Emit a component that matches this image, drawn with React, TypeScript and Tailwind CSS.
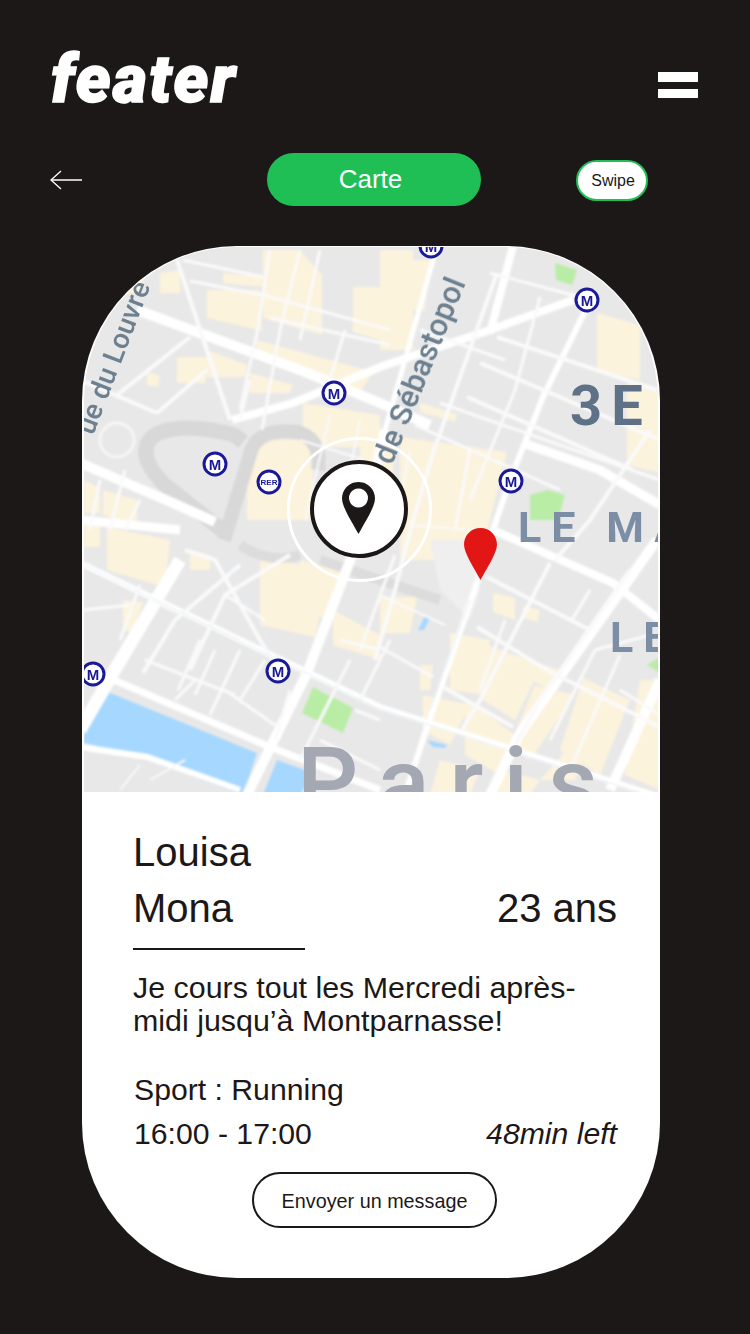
import React from "react";

const sans = "font-['Liberation_Sans',Arial,sans-serif]";

const blocks: string[] = [
  "207,290 260,290 262,331 207,318", "263,250 300,250 322,275 322,335 263,318", "353,287 380,287 380,340 353,332",
  "223,273 263,277 263,287 223,283", "257,340 373,372 360,392 257,352", "207,350 247,365 245,377 207,377",
  "250,373 293,385 290,393 250,393", "303,403 380,415 380,447 303,447", "247,440 313,440 313,520 247,520",
  "147,372 160,376 158,387 147,385", "177,357 210,357 205,383 177,383", "160,273 180,270 180,293 160,293",
  "84,480 100,488 100,513 84,513", "103,490 137,500 137,525 103,515", "380,250 413,250 413,350 380,350",
  "413,260 430,260 425,310 413,310", "597,313 640,325 640,380 597,370", "627,383 660,392 660,473 627,465",
  "420,403 457,414 455,422 420,412", "400,437 507,452 490,520 400,520", "107,527 170,540 165,587 107,570",
  "190,550 210,555 210,570 190,570", "260,557 330,570 315,637 260,625", "333,610 380,635 380,660 333,645",
  "123,600 143,602 133,632 123,630", "84,520 100,520 100,547 84,547", "400,520 490,520 480,560 400,560",
  "493,593 515,598 515,620 493,612", "470,640 560,670 555,692 470,650", "450,633 490,640 485,695 450,690",
  "483,653 537,675 515,720 483,700", "380,597 417,597 410,633 380,633", "523,606 540,610 538,622 523,618",
  "423,695 470,705 450,745 423,730", "465,698 515,735 500,775 465,755", "535,685 575,695 530,760 510,745",
  "583,678 630,700 600,775 560,750", "640,680 660,680 660,790 625,775", "420,665 433,665 430,690 420,690",
  "580,735 590,740 575,780 540,780", "120,272 145,272 140,293 120,293",
  "440,760 480,770 470,795 430,795", "500,770 540,780 530,795 495,795", "360,440 395,440 390,520 360,520",
  "300,560 345,570 330,620 300,610",
];

const wide: [string, number][] = [
  ["137,310 300,370 380,403 430,425", 10], ["523,443 600,470 660,505", 9],
  ["437,246 405,360 385,430", 5], ["385,430 375,470 353,553 307,673 247,795", 10],
  ["657,540 520,733 490,795", 10], ["493,530 613,583 660,620", 8], ["660,680 610,790", 10],
  ["180,560 113,673 80,730", 13], ["80,463 173,503 215,522", 10], ["80,520 180,530", 9],
  ["573,300 490,330 380,367 293,403 232,420", 8], ["587,307 543,397 510,480 493,530 477,583 427,727 405,795", 6],
  ["107,677 270,747 380,790", 7], ["80,747 147,757 240,790", 6], ["80,563 380,707 500,745 660,797", 6],
  ["513,246 490,333", 8],
];
const thin: [string, number][] = [
  ["177,260 230,420", 4], ["183,260 263,277", 3], ["190,281 263,295", 3], ["270,250 257,333 240,410", 3],
  ["117,395 190,337", 4], ["157,413 207,370", 4], ["80,380 157,413", 4], ["300,250 280,330 262,430", 3],
  ["263,295 390,330", 3], ["270,318 390,345", 3], ["320,250 300,340", 3], ["345,330 330,380", 3], ["250,380 240,420", 3],
  ["490,273 580,297", 3], ["497,337 657,390", 4], ["480,363 660,440", 4], ["467,397 633,470", 4], ["497,273 433,453 413,520 395,590 375,660", 4],
  ["420,330 505,360", 3], ["440,403 660,480", 3], ["415,425 560,490", 3], ["540,297 515,390 470,500", 3],
  ["650,430 590,520 555,560", 4], ["487,577 590,630", 4], ["550,563 480,700 460,733", 4], ["477,627 547,670 660,727", 4],
  ["443,687 513,727", 4], ["380,647 433,677", 3], ["590,590 572,620", 3], ["630,570 540,700 515,745", 4], ["595,650 550,740", 3],
  ["620,655 570,770", 3], ["650,635 595,650", 3], ["620,690 660,715", 3], ["390,640 360,700", 3], ["395,555 360,650", 3],
  ["190,670 225,595 290,555", 4], ["143,673 175,620 240,565", 4], ["185,550 215,560 260,640 285,680", 4], ["225,595 265,620", 3],
  ["145,660 235,695", 3], ["195,680 175,700", 3], ["150,600 240,640", 3], ["200,640 178,690", 3], ["215,650 195,695", 3],
  ["240,650 210,715", 3], ["225,690 275,725", 3], ["120,640 140,585", 3], ["84,610 130,605", 3],
  ["240,700 265,660", 3], ["290,690 275,740", 3], ["350,660 300,760", 3], ["340,640 380,650", 3], ["355,710 380,720", 3],
  ["320,740 380,770", 3], ["100,480 90,530", 3], ["125,470 110,530", 3], ["140,500 125,530", 3],
  ["330,415 305,520", 2], ["300,440 365,460", 2], ["360,420 340,520", 2], ["410,450 395,530", 2], ["470,450 455,530", 3],
  ["410,525 470,530", 2], ["380,595 445,625", 2],
  ["505,620 480,690", 3], ["150,780 185,760", 2], ["120,790 140,765", 2],
];
const metros: [number, number][] = [[334, 393], [215, 464], [587, 300], [511, 481], [278, 671], [93, 674], [431, 246]];

function MapArt() {
  return (
    <svg className="block w-[574px] h-[545px]" viewBox="84 247 574 545">
      <defs>
        <filter id="soft" x="-2%" y="-2%" width="104%" height="104%"><feGaussianBlur stdDeviation="0.9" /></filter>
        <filter id="softer" x="-5%" y="-5%" width="110%" height="110%"><feGaussianBlur stdDeviation="0.5" /></filter>
      </defs>
      <rect x="82" y="246" width="578" height="546" fill="#e8e8e8" />
      <g filter="url(#soft)">
        {blocks.map((p, i) => <polygon key={i} points={p} fill="#fcf3dd" />)}
        <polygon points="84,733 103,690 257,753 243,795 140,757 84,743" fill="#a6d8ff" />
        <polygon points="263,795 277,760 313,773 300,795" fill="#a6d8ff" />
        <polygon points="418,630 425,616 430,618 424,630" fill="#a6d8ff" />
        <polygon points="427,740 447,745 445,748 433,747" fill="#a6d8ff" />
        <polygon points="313,687 353,708 343,733 302,713" fill="#b9eda6" />
        <polygon points="555,263 577,270 572,285 556,280" fill="#b9eda6" />
        <polygon points="530,495 548,490 565,495 558,520 530,520" fill="#b9eda6" />
        <polygon points="647,665 660,657 660,673" fill="#b9eda6" />
        <path d="M222 530 L165 485 Q135 455 152 437 Q175 420 235 435 L243 442" fill="none" stroke="#d8d8d8" strokeWidth="15" />
        <path d="M224 540 L252 448 Q262 428 298 432 Q322 440 318 470" fill="none" stroke="#d8d8d8" strokeWidth="14" />
        <path d="M240 545 Q270 565 300 555 M320 560 L440 600" fill="none" stroke="#dcdcdc" strokeWidth="10" />
        <circle cx="117" cy="440" r="17" fill="#e8e8e8" stroke="#f6f6f6" strokeWidth="3" />
        <polygon points="430,540 470,540 480,590 470,620 440,590" fill="#efefef" />
        {wide.map(([p, w], i) => <polyline key={i} points={p} fill="none" stroke="#ffffff" strokeWidth={w} />)}
        {thin.map(([p, w], i) => <polyline key={i} points={p} fill="none" stroke="#fafafa" strokeWidth={w} />)}
        <polyline points="84,565 380,709" fill="none" stroke="#e3edf5" strokeWidth="1" />
        <polyline points="380,709 660,799" fill="none" stroke="#e3edf5" strokeWidth="1" />
        <polyline points="225,560 285,670" fill="none" stroke="#e3edf5" strokeWidth="1" />
        <polyline points="470,600 430,710" fill="none" stroke="#e3edf5" strokeWidth="1" />
      </g>
      <g fontFamily="Roboto, 'Noto Sans', sans-serif" filter="url(#softer)">
        <text transform="translate(93,436) rotate(-69)" fontSize="28" fontWeight="500" fill="#6d8090">ue du Louvre</text>
        <text transform="translate(392,466) rotate(-68)" fontSize="31" fontWeight="500" fill="#6d8090">de Sébastopol</text>
        <text x="570" y="425" fontSize="56" fontWeight="700" fill="#5e7187" letterSpacing="9">3E</text>
        <text x="518" y="542" fontSize="43" fontWeight="700" fill="#7b8ea6" letterSpacing="10">LE MA</text>
        <text x="610" y="652" fontSize="43" fontWeight="700" fill="#7b8ea6" letterSpacing="10">LE</text>
        <text x="297" y="816" fontSize="96" fontWeight="500" fill="#a3a8b3" letterSpacing="20">Paris</text>
      </g>
      {metros.map(([x, y], i) => (
        <g key={i}>
          <circle cx={x} cy={y} r="11" fill="#ffffff" stroke="#1a1a99" strokeWidth="3" />
          <text x={x} y={y + 5.500} textAnchor="middle" fontSize="15" fontWeight="700" fill="#1a1a99" fontFamily="'Liberation Sans', sans-serif">M</text>
        </g>
      ))}
      <g>
        <circle cx="269" cy="482" r="11" fill="#ffffff" stroke="#1a1a99" strokeWidth="3" />
        <text x="269" y="485" textAnchor="middle" fontSize="8" fontWeight="700" fill="#1a1a99" fontFamily="'Liberation Sans', sans-serif">RER</text>
      </g>
      <circle cx="359.500" cy="509.500" r="71" fill="none" stroke="#ffffff" strokeWidth="3" />
      <circle cx="359" cy="509" r="47" fill="#ffffff" stroke="#1c1818" strokeWidth="4" />
      <path fillRule="evenodd" d="M358.500 482 C349 482 342 489.500 342 498.500 C342 507 352 522 358.500 534 C365 522 375 507 375 498.500 C375 489.500 368 482 358.500 482 Z M358.500 488.500 A9.500 9.500 0 1 1 358.499 488.500 Z" fill="#1c1818" />
      <path d="M480.500 528 C471 528 464 535.500 464 544.500 C464 553 474 568 480.500 580 C487 568 497 553 497 544.500 C497 535.500 490 528 480.500 528 Z" fill="#e31616" />
    </svg>
  );
}

export default function App() {
  return (
    <div className={`w-[750px] h-[1334px] bg-[#1c1818] overflow-hidden ${sans}`}>
      <header className="flex items-start justify-between pt-[38px] pl-[51px] pr-[52px] h-[153px]">
        <div className="font-['Roboto',sans-serif] italic font-black text-white text-[66px] leading-[84px] tracking-[0.035em] [-webkit-text-stroke:1.5px_white]">feater</div>
        <div className="mt-[34px] flex flex-col gap-[7px]">
          <div className="w-[40px] h-[9.5px] bg-white" />
          <div className="w-[40px] h-[9.5px] bg-white" />
        </div>
      </header>
      <div className="flex items-center h-[53px]">
        <svg className="ml-[50px] w-[32px] h-[20px]" viewBox="0 0 32 20" fill="none" stroke="#ffffff">
          <path d="M32 10 H1" strokeWidth="1.500" />
          <path d="M11 1 L1 10 L11 19" strokeWidth="1.300" />
        </svg>
        <div className="ml-[185px] w-[214px] h-[53px] rounded-full bg-[#20bf55] text-white text-[26px] pr-[7px] flex items-center justify-center">Carte</div>
        <div className="ml-[95px] mt-[2px] w-[72px] h-[41px] rounded-full bg-white border-2 border-[#20bf55] text-[#1c1818] text-[16px] pl-[2px] flex items-center justify-center">Swipe</div>
      </div>
      <main className="mt-[40px] ml-[82px] w-[578px] h-[1032px] rounded-[155px] bg-white overflow-hidden">
        <div className="pt-[1px] px-[2px]">
          <div className="rounded-t-[153px] overflow-hidden">
            <MapArt />
          </div>
        </div>
        <section className="h-[486px] text-[#1c1818] pt-[36px] px-[51px]">
          <div className="text-[40px] leading-[48px]">Louisa</div>
          <div className="flex justify-between items-baseline text-[40px] leading-[48px] mt-[8px] mr-[-8px]">
            <span>Mona</span>
            <span>23 ans</span>
          </div>
          <div className="mt-[16px] w-[172px] h-[2px] bg-[#1c1818]" />
          <p className="mt-[21px] text-[30.4px] leading-[33px] w-[470px]">Je cours tout les Mercredi après-<br />midi jusqu’à Montparnasse!</p>
          <div className="mt-[34px] ml-[1px] text-[30.2px] leading-[38px]">Sport : Running</div>
          <div className="mt-[6px] ml-[1px] mr-[-8px] flex justify-between items-baseline text-[30.2px] leading-[38px]">
            <span>16:00 - 17:00</span>
            <span className="italic">48min left</span>
          </div>
          <div className="flex justify-center mt-[19px] ml-[7px]">
            <div className="w-[245px] h-[56px] rounded-full border-2 border-[#1c1818] bg-white text-[19.8px] pt-[3px] flex items-center justify-center">Envoyer un message</div>
          </div>
        </section>
      </main>
    </div>
  );
}
